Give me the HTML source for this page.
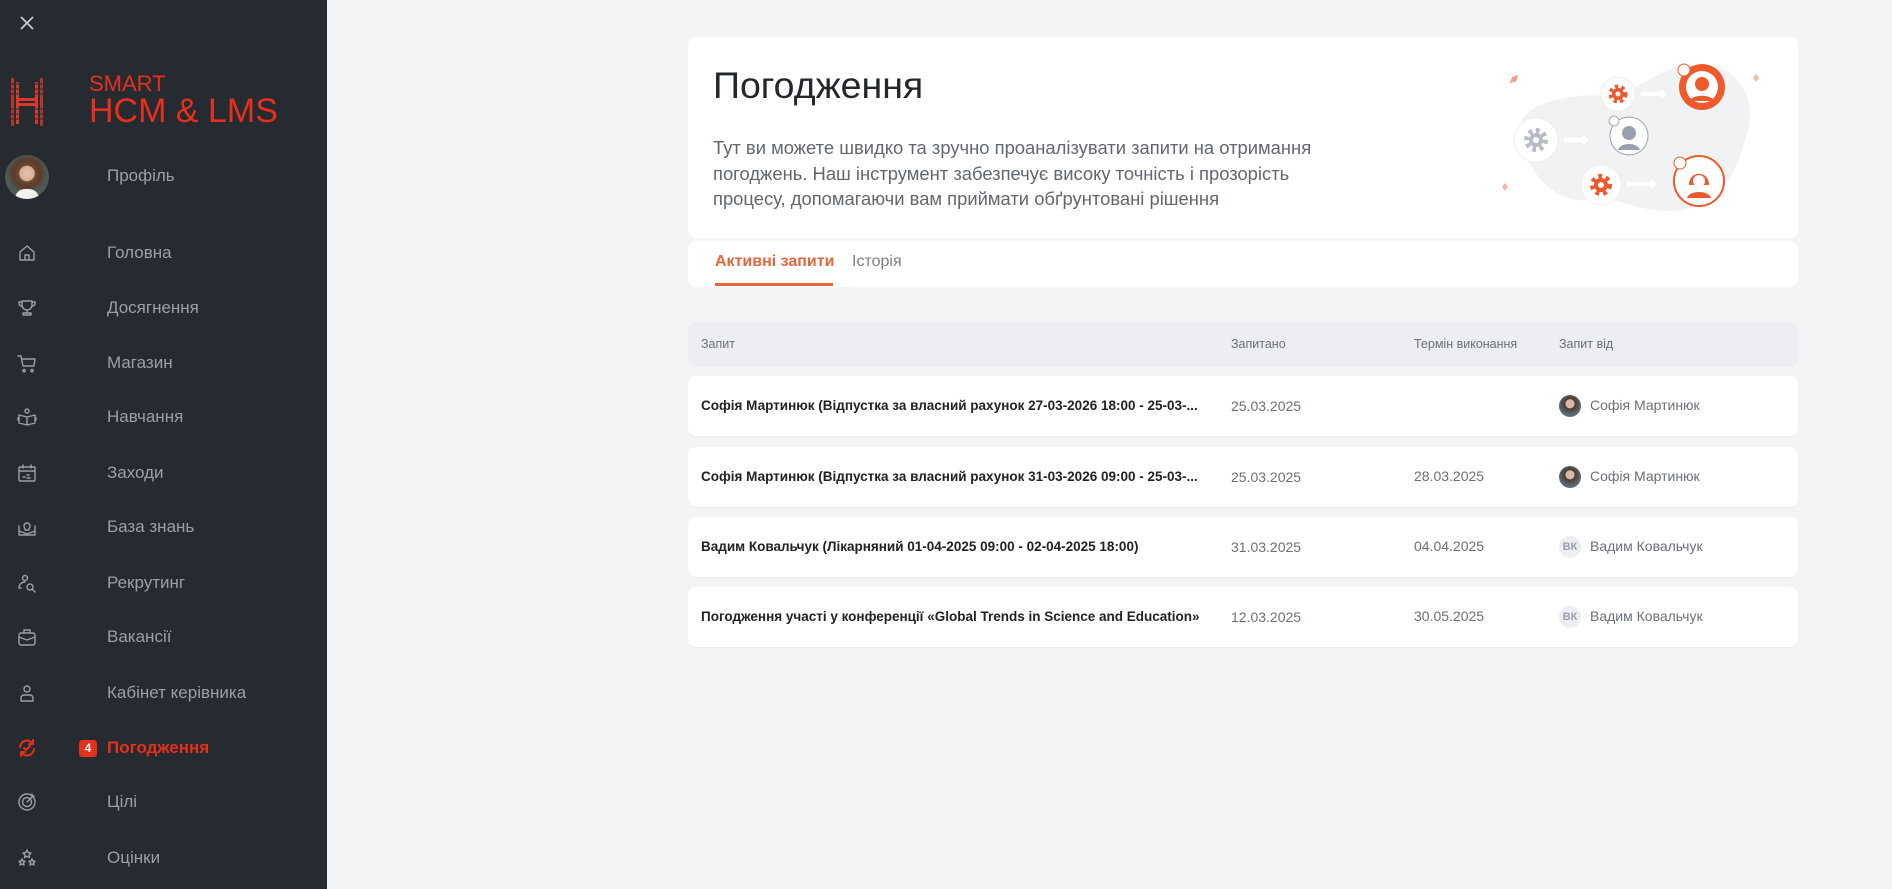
<!DOCTYPE html>
<html><head><meta charset="utf-8"><style>
*{margin:0;padding:0;box-sizing:border-box}
body{width:1892px;height:889px;overflow:hidden;background:#f3f4f6;font-family:"Liberation Sans",sans-serif;position:relative}
.sb{position:absolute;left:0;top:0;width:327px;height:889px;background:#262a31}
.abs{position:absolute}
.mi{position:absolute;left:107px;font-size:17px;color:#9aa0a8;line-height:20px}
.ic{position:absolute;left:17px;width:20px;height:20px}
.ic svg{width:20px;height:20px;fill:none;stroke:#9aa0a8;stroke-width:1.4;stroke-linecap:round;stroke-linejoin:round}
.card{position:absolute;left:688px;width:1110px;background:#fff;border-radius:8px}
.row{position:absolute;left:688px;width:1110px;height:60px;background:#fff;border-radius:8px;box-shadow:0 1px 1px rgba(0,0,0,.04)}
.row div{position:absolute;top:0;line-height:60px;font-size:14px;color:#6b7078}
.row .q{left:13px;color:#222;font-weight:bold;font-size:13.5px}
.av{position:absolute;left:871px;top:19px;width:22px;height:22px;border-radius:50%}
</style></head><body>
<div class="sb">
<svg class="abs" style="left:18px;top:14px" width="18" height="18" viewBox="0 0 18 18"><path d="M3 3L15 15M15 3L3 15" stroke="#c7cbd1" stroke-width="1.8"/></svg>
<svg class="abs" style="left:10px;top:76px" width="34" height="52" viewBox="0 0 34 52">
<g fill="#d8392b">
<rect x="1" y="2" width="3" height="48" rx="1" opacity=".8"/><rect x="6" y="6" width="3" height="42" rx="1"/>
<rect x="25" y="6" width="3" height="42" rx="1"/><rect x="30" y="2" width="3" height="48" rx="1" opacity=".8"/>
<rect x="9" y="22" width="16" height="3"/><rect x="9" y="27" width="16" height="3"/></g>
<g stroke="#262a31" stroke-width="1"><path d="M0 8H34M0 13H34M0 18H34M0 33H34M0 38H34M0 43H34"/></g></svg>
<div class="abs" style="left:89px;top:73px;color:#e5301c;font-size:22px;line-height:22px">SMART</div>
<div class="abs" style="left:89px;top:94px;color:#e5301c;font-size:34px;line-height:34px">HCM &amp; LMS</div>
<div class="abs" style="left:5px;top:155px;width:44px;height:44px;border-radius:50%;background:radial-gradient(circle at 50% 42%,#e8c4ad 0,#d8ad94 22%,#6d4a33 24%,#5a3c2a 40%,#4b5a55 60%);overflow:hidden"><div style="position:absolute;left:10px;top:34px;width:24px;height:12px;background:#f2f2f0;border-radius:10px 10px 0 0"></div></div>
<div class="mi" style="top:166px">Профіль</div>

<div class="ic" style="top:243px"><svg viewBox="0 0 20 20"><path d="M3 9L10 3L17 9V17H3Z M8 17V12H12V17"/></svg></div>
<div class="mi" style="top:243px">Головна</div>
<div class="ic" style="top:298px"><svg viewBox="0 0 20 20"><path d="M5 3H15V7A5 5 0 0 1 5 7Z M5 4H2V6A3 3 0 0 0 5 8 M15 4H18V6A3 3 0 0 1 15 8 M10 12V15 M6 17H14V15H6Z"/></svg></div>
<div class="mi" style="top:298px">Досягнення</div>
<div class="ic" style="top:353px"><svg viewBox="0 0 20 20"><path d="M1 3H4L6 13H17L18 6H5 M7 16.5a1.2 1.2 0 1 0 .1 0 M15 16.5a1.2 1.2 0 1 0 .1 0"/></svg></div>
<div class="mi" style="top:353px">Магазин</div>
<div class="ic" style="top:407px"><svg viewBox="0 0 20 20"><circle cx="10" cy="4" r="2"/><path d="M2 8L10 10L18 8V16L10 18L2 16Z M10 10V18 M2 11H1V13H2 M18 11H19V13H18"/></svg></div>
<div class="mi" style="top:407px">Навчання</div>
<div class="ic" style="top:463px"><svg viewBox="0 0 20 20"><rect x="2" y="4" width="16" height="14" rx="1"/><path d="M6 2V5M14 2V5M2 8H18M6 14H8M10 12H12M10 15H13"/></svg></div>
<div class="mi" style="top:463px">Заходи</div>
<div class="ic" style="top:517px"><svg viewBox="0 0 20 20"><path d="M2 9V18H18V9 M2 14L10 17L18 14 M7 9A3 3 0 1 1 13 9C13 11 12 11 12 13H8C8 11 7 11 7 9Z"/></svg></div>
<div class="mi" style="top:517px">База знань</div>
<div class="ic" style="top:573px"><svg viewBox="0 0 20 20"><circle cx="8" cy="5" r="2.5"/><path d="M4 15H2C2 11 5 9 8 9"/><circle cx="13" cy="14" r="3"/><path d="M15 16L18 19"/></svg></div>
<div class="mi" style="top:573px">Рекрутинг</div>
<div class="ic" style="top:627px"><svg viewBox="0 0 20 20"><rect x="2" y="6" width="16" height="12" rx="2"/><path d="M7 6V3H13V6 M2 10L10 13L18 10"/></svg></div>
<div class="mi" style="top:627px">Вакансії</div>
<div class="ic" style="top:683px"><svg viewBox="0 0 20 20"><circle cx="10" cy="6" r="3"/><path d="M4 18V15A3 3 0 0 1 7 12H13A3 3 0 0 1 16 15V18Z"/></svg></div>
<div class="mi" style="top:683px">Кабінет керівника</div>
<div class="ic" style="top:738px"><svg viewBox="0 0 20 20" style="stroke:#e5301c;stroke-width:2"><path d="M3 9A7 7 0 0 1 16 6 M17 11A7 7 0 0 1 4 14 M16 2V6H12 M4 18V14H8 M7 10L9 12L13 8"/></svg></div>
<div class="abs" style="left:79px;top:740px;width:18px;height:17px;background:#e5301c;border-radius:3px;color:#fff;font-size:12px;font-weight:bold;text-align:center;line-height:17px">4</div>
<div class="mi" style="top:738px;color:#e5301c;font-weight:bold">Погодження</div>
<div class="ic" style="top:792px"><svg viewBox="0 0 20 20"><circle cx="10" cy="10" r="8"/><circle cx="10" cy="10" r="4.5"/><path d="M10 10L16 4M15 2V4H17"/></svg></div>
<div class="mi" style="top:792px">Цілі</div>
<div class="ic" style="top:848px"><svg viewBox="0 0 20 20"><path d="M10 2L11.2 4.5L14 5L12 7L12.5 9.5L10 8.3L7.5 9.5L8 7L6 5L8.8 4.5Z M5 11L6 13L8 13.3L6.5 14.8L7 17L5 16L3 17L3.5 14.8L2 13.3L4 13Z M15 11L16 13L18 13.3L16.5 14.8L17 17L15 16L13 17L13.5 14.8L12 13.3L14 13Z"/></svg></div>
<div class="mi" style="top:848px">Оцінки</div>
</div>

<div class="card" style="top:37px;height:201px">
<div class="abs" style="left:25px;top:26px;font-size:37.5px;color:#23262b;font-weight:500;line-height:44px">Погодження</div>
<div class="abs" style="left:25px;top:98px;width:640px;font-size:18.4px;line-height:25.5px;color:#62676f">Тут ви можете швидко та зручно проаналізувати запити на отримання погоджень. Наш інструмент забезпечує високу точність і прозорість процесу, допомагаючи вам приймати обґрунтовані рішення</div>
<svg class="abs" style="left:800px;top:10px" width="300" height="185" viewBox="1488 47 300 185">
<path d="M1520 135C1515 105 1560 95 1600 95C1640 95 1650 70 1690 65C1740 60 1760 100 1745 140C1735 175 1720 205 1680 210C1640 215 1620 195 1590 200C1555 205 1525 170 1520 135Z" fill="#f1f2f4"/>
<g transform="translate(800,0)">
<path d="M712 77l3 -6 3 6 -3 6z" fill="#f4a08a" transform="rotate(45 712 77)"/>
<path d="M953 78l3 -4 3 4 -3 4z" fill="#f6b7a7"/>
<path d="M702 187l3 -4 3 4 -3 4z" fill="#f6b7a7"/>
<circle cx="736" cy="140" r="22" fill="#fff" stroke="#eee"/>
<circle cx="736" cy="140" r="9" fill="none" stroke="#b9bcc4" stroke-width="6" stroke-dasharray="3.5 3.5"/><circle cx="736" cy="140" r="7" fill="#b9bcc4"/><circle cx="736" cy="140" r="3" fill="#fff"/>
<path d="M763 137H782V133L790 140L782 147V143H763Z" fill="#fff" stroke="#eee"/>
<circle cx="818" cy="94" r="17" fill="#fff" stroke="#eee"/>
<circle cx="818" cy="94" r="7" fill="none" stroke="#ee5a2c" stroke-width="5" stroke-dasharray="3 3"/><circle cx="818" cy="94" r="6" fill="#ee5a2c"/><circle cx="818" cy="94" r="2.5" fill="#fff"/>
<path d="M840 91H860V87L868 94L860 101V97H840Z" fill="#fff" stroke="#eee"/>
<circle cx="902" cy="87" r="23" fill="#ee5a2c"/><circle cx="902" cy="87" r="16" fill="#fff"/><circle cx="902" cy="84" r="7" fill="#ee5a2c"/><path d="M890 101C892 94 912 94 914 101Z" fill="#ee5a2c"/>
<circle cx="884" cy="70" r="6" fill="#fff" stroke="#ee5a2c"/>
<circle cx="829" cy="136" r="19" fill="#fff" stroke="#9aa0ab"/><circle cx="829" cy="133" r="7" fill="#9aa0ab"/><path d="M818 150C820 142 838 142 840 150Z" fill="#9aa0ab"/>
<circle cx="814" cy="121" r="5" fill="#fff" stroke="#aaa"/>
<circle cx="801" cy="185" r="20" fill="#fff" stroke="#eee"/>
<circle cx="801" cy="185" r="8" fill="none" stroke="#ee5a2c" stroke-width="6" stroke-dasharray="3.5 3.5"/><circle cx="801" cy="185" r="7" fill="#ee5a2c"/><circle cx="801" cy="185" r="3" fill="#fff"/>
<path d="M825 181H850V177L858 184L850 191V187H825Z" fill="#fff" stroke="#eee"/>
<circle cx="899" cy="181" r="25" fill="#fff" stroke="#ee5a2c" stroke-width="2"/><path d="M889 185C889 170 909 170 909 185Z" fill="#ee5a2c"/><circle cx="899" cy="181" r="6" fill="#fff"/><path d="M887 198C889 190 909 190 911 198Z" fill="#ee5a2c"/>
<circle cx="880" cy="163" r="6" fill="#fff" stroke="#ee5a2c"/>
</g></svg>
</div>

<div class="card" style="top:241px;height:46px">
<div class="abs" style="left:27px;top:12px;font-size:16px;font-weight:bold;color:#e8643a">Активні запити</div>
<div class="abs" style="left:27px;top:42px;width:118px;height:3px;background:#e8643a"></div>
<div class="abs" style="left:164px;top:12px;font-size:16px;color:#7b8088">Історія</div>
</div>

<div class="abs" style="left:688px;top:322px;width:1110px;height:45px;background:#eceef1;border-radius:8px;font-size:12.5px;color:#6b7078;line-height:45px">
<span class="abs" style="left:13px">Запит</span><span class="abs" style="left:543px">Запитано</span><span class="abs" style="left:726px">Термін виконання</span><span class="abs" style="left:871px">Запит від</span></div>

<div class="row" style="top:376px"><div class="q">Софія Мартинюк (Відпустка за власний рахунок 27-03-2026 18:00 - 25-03-...</div><div style="left:543px">25.03.2025</div><span class="av" style="background:radial-gradient(circle at 50% 40%,#d9b9a5 0,#d9b9a5 25%,#4a3a30 28%,#5c6a73 65%)"></span><div style="left:902px;line-height:58px">Софія Мартинюк</div></div>
<div class="row" style="top:447px"><div class="q">Софія Мартинюк (Відпустка за власний рахунок 31-03-2026 09:00 - 25-03-...</div><div style="left:543px">25.03.2025</div><div style="left:726px;line-height:58px">28.03.2025</div><span class="av" style="background:radial-gradient(circle at 50% 40%,#d9b9a5 0,#d9b9a5 25%,#4a3a30 28%,#5c6a73 65%)"></span><div style="left:902px;line-height:58px">Софія Мартинюк</div></div>
<div class="row" style="top:517px"><div class="q">Вадим Ковальчук (Лікарняний 01-04-2025 09:00 - 02-04-2025 18:00)</div><div style="left:543px">31.03.2025</div><div style="left:726px;line-height:58px">04.04.2025</div><span class="av" style="background:#eceef1;color:#9aa0a8;font-size:11px;font-weight:bold;text-align:center;line-height:22px">ВК</span><div style="left:902px;line-height:58px">Вадим Ковальчук</div></div>
<div class="row" style="top:587px"><div class="q">Погодження участі у конференції «Global Trends in Science and Education»</div><div style="left:543px">12.03.2025</div><div style="left:726px;line-height:58px">30.05.2025</div><span class="av" style="background:#eceef1;color:#9aa0a8;font-size:11px;font-weight:bold;text-align:center;line-height:22px">ВК</span><div style="left:902px;line-height:58px">Вадим Ковальчук</div></div>
</body></html>
